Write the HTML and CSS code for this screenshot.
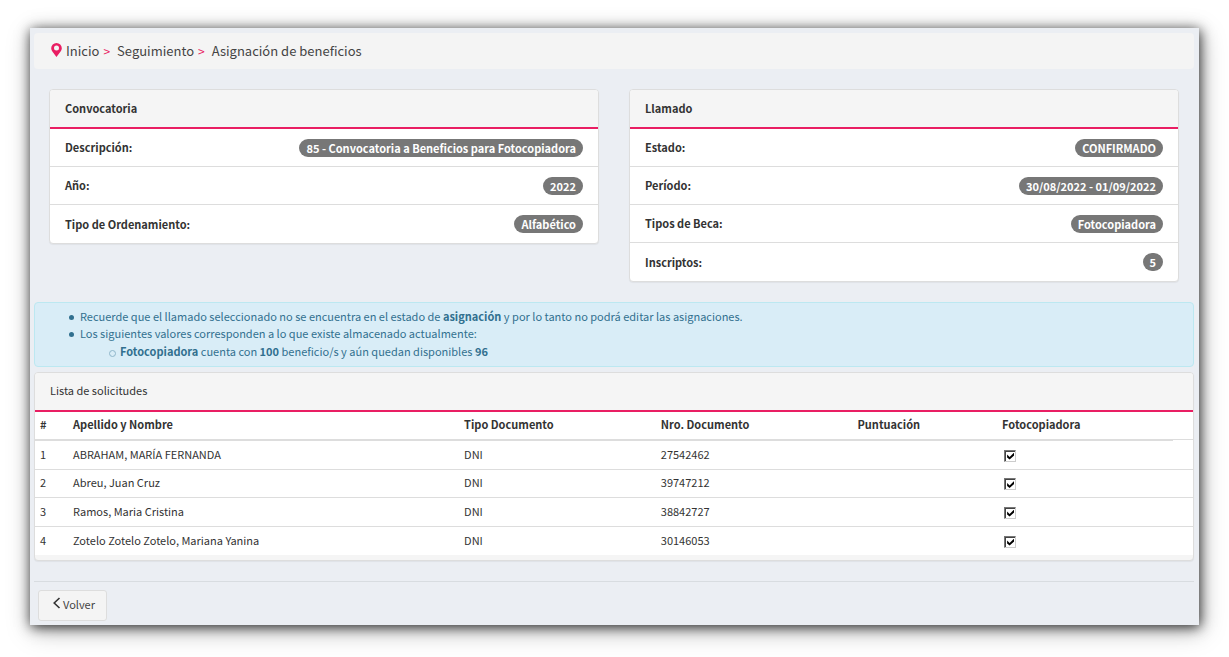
FILE: index.html
```html
<!DOCTYPE html>
<html lang="es">
<head>
<meta charset="utf-8">
<title>Asignación de beneficios</title>
<link rel="stylesheet" href="styles.css">
</head>
<body>
<main class="window">
  <nav class="breadcrumb" aria-label="Ruta">
    <svg class="pin" viewBox="0 0 11 14" aria-hidden="true"><path fill-rule="evenodd" d="M5.500 0A5.300 5.300 0 0 0 .2 5.300C.2 8 3 10.500 5.500 14 8 10.500 10.800 8 10.800 5.300A5.300 5.300 0 0 0 5.500 0zm0 2.500a2.500 2.500 0 1 1 0 5 2.500 2.500 0 0 1 0-5z"/></svg>
    <a href="#">Inicio</a>
    <span class="sep">&gt;</span>
    <a href="#">Seguimiento</a>
    <span class="sep">&gt;</span>
    <a href="#">Asignación de beneficios</a>
  </nav>

  <div class="columns">
    <section class="panel">
      <h2 class="panel-heading strong">Convocatoria</h2>
      <ul class="facts">
        <li><b>Descripción:</b><span class="badge">85 - Convocatoria a Beneficios para Fotocopiadora</span></li>
        <li><b>Año:</b><span class="badge">2022</span></li>
        <li><b>Tipo de Ordenamiento:</b><span class="badge">Alfabético</span></li>
      </ul>
    </section>
    <section class="panel">
      <h2 class="panel-heading strong">Llamado</h2>
      <ul class="facts">
        <li><b>Estado:</b><span class="badge">CONFIRMADO</span></li>
        <li><b>Período:</b><span class="badge">30/08/2022 - 01/09/2022</span></li>
        <li><b>Tipos de Beca:</b><span class="badge">Fotocopiadora</span></li>
        <li><b>Inscriptos:</b><span class="badge">5</span></li>
      </ul>
    </section>
  </div>

  <div class="alert">
    <ul>
      <li>Recuerde que el llamado seleccionado no se encuentra en el estado de <b>asignación</b> y por lo tanto no podrá editar las asignaciones.</li>
      <li>Los siguientes valores corresponden a lo que existe almacenado actualmente:
        <ul>
          <li><b>Fotocopiadora</b> cuenta con <b>100</b> beneficio/s y aún quedan disponibles <b>96</b></li>
        </ul>
      </li>
    </ul>
  </div>

  <section class="panel list">
    <h2 class="panel-heading">Lista de solicitudes</h2>
    <table>
      <colgroup><col class="c-num"><col class="c-name"><col class="c-type"><col class="c-doc"><col class="c-score"><col class="c-check"><col class="c-end"></colgroup>
      <thead>
        <tr><th>#</th><th>Apellido y Nombre</th><th>Tipo Documento</th><th>Nro. Documento</th><th>Puntuación</th><th>Fotocopiadora</th><td></td></tr>
      </thead>
      <tbody>
        <tr><td>1</td><td>ABRAHAM, MARÍA FERNANDA</td><td>DNI</td><td>27542462</td><td></td><td><input type="checkbox" checked aria-label="Fotocopiadora, fila 1"></td><td></td></tr>
        <tr><td>2</td><td>Abreu, Juan Cruz</td><td>DNI</td><td>39747212</td><td></td><td><input type="checkbox" checked aria-label="Fotocopiadora, fila 2"></td><td></td></tr>
        <tr><td>3</td><td>Ramos, Maria Cristina</td><td>DNI</td><td>38842727</td><td></td><td><input type="checkbox" checked aria-label="Fotocopiadora, fila 3"></td><td></td></tr>
        <tr><td>4</td><td>Zotelo Zotelo Zotelo, Mariana Yanina</td><td>DNI</td><td>30146053</td><td></td><td><input type="checkbox" checked aria-label="Fotocopiadora, fila 4"></td><td></td></tr>
      </tbody>
    </table>
  </section>

  <footer class="actions">
    <button type="button" class="back"><svg viewBox="0 0 8 12" aria-hidden="true"><path d="M7 1 1.700 6 7 11"/></svg>Volver</button>
  </footer>
</main>
</body>
</html>
```

FILE: styles.css
```css
* {
  box-sizing: border-box;
}

body {
  margin: 0;
  padding: 28px 30px 32px;
  background: #fff;
  color: #333;
  font: 11px/17px "Noto Sans CJK SC", "Noto Sans", sans-serif;
}

.window {
  padding: 5px 5px 4px 4px;
  background: #ebeef3;
  box-shadow: 1px 2px 12px rgba(0, 0, 0, .8), 2px 6px 24px rgba(0, 0, 0, .25);
}

.breadcrumb {
  display: flex;
  align-items: center;
  height: 36px;
  padding: 0 17px 2px;
  border-radius: 4px;
  background: #f4f4f4;
  font-size: 13px;
}

.breadcrumb a {
  color: #444;
  text-decoration: none;
}

.pin {
  width: 11px;
  height: 14px;
  margin-right: 4px;
  fill: #e91e63;
}

.sep {
  margin: 0 7px 0 4px;
  color: #e91e63;
  font-size: 12px;
}

.columns {
  display: grid;
  grid-template-columns: 1fr 1fr;
  align-items: start;
  gap: 30px;
  padding: 20px 15px;
}

.panel {
  overflow: hidden;
  border: 1px solid #ddd;
  border-radius: 4px;
  background: #fff;
  box-shadow: 0 1px 1px rgba(0, 0, 0, .05);
}

.panel-heading {
  margin: 0;
  padding: 10px 15px;
  border-bottom: 2px solid #e91e63;
  background: #f5f5f5;
  font-size: 11px;
  font-weight: 400;
}

.strong {
  font-weight: 700;
}

.facts {
  margin: 0;
  padding: 0;
  list-style: none;
}

.facts li {
  display: flex;
  align-items: center;
  justify-content: space-between;
  height: 38px;
  padding: 0 15px;
  border-bottom: 1px solid #ddd;
}

.facts li:last-child {
  border-bottom: 0;
}

.badge {
  padding: 0 7px;
  border-radius: 10px;
  background: #777;
  color: #fff;
  font-weight: 700;
  line-height: 18px;
}

.alert {
  padding: 5px 5px 6px;
  border: 1px solid #bce8f1;
  border-radius: 4px;
  background: #d9edf7;
  color: #31708f;
}

.alert ul {
  margin: 0;
  padding-left: 40px;
  list-style: none;
}

.alert ul ul {
  padding-top: 1px;
}

.alert li {
  position: relative;
}

.alert li::before {
  content: "";
  position: absolute;
  top: 7px;
  left: -11px;
  width: 5px;
  height: 5px;
  border-radius: 50%;
  background: #31708f;
}

.alert ul ul li::before {
  border: 1px solid #8fb6ca;
  background: none;
}

.list {
  margin-top: 5px;
  padding-bottom: 5px;
  background: #f5f5f5;
}

.list .panel-heading {
  padding: 9px 15px 11px;
}

table {
  width: 100%;
  border-collapse: separate;
  border-spacing: 0;
  table-layout: fixed;
  background: #fff;
}

.c-num { width: 33px; }
.c-name { width: 33.8%; }
.c-type { width: 17%; }
.c-doc { width: 17%; }
.c-score { width: 12.5%; }
.c-check { width: 15.2%; }
.c-end { width: 20px; }

th,
td {
  height: 29px;
  padding: 0 5px 2px;
  border-bottom: 1px solid #ddd;
  text-align: left;
  vertical-align: middle;
}

th {
  border-bottom-width: 2px;
}

thead td {
  background: linear-gradient(#ddd, #ddd) 0 27px / 100% 1px no-repeat;
  border-bottom: 0;
}

tbody tr:nth-child(even) td {
  height: 28px;
}

tbody tr:last-child td {
  border-bottom: 0;
}

input[type="checkbox"] {
  display: block;
  appearance: none;
  width: 12px;
  height: 12px;
  margin: 3px 2px 0;
  border: 1px solid;
  border-color: #777 #ccc #ccc #777;
  background: #fff;
  box-shadow: inset 1px 1px #444;
}

input[type="checkbox"]:checked::before {
  content: "";
  display: block;
  width: 7px;
  height: 7px;
  margin: 2px;
  background: #000;
  clip-path: polygon(0 28%, 36% 64%, 100% 0, 100% 42%, 36% 100%, 0 70%);
}

.actions {
  margin-top: 20px;
  padding: 8px 4px 0;
  border-top: 1px solid #d8dce0;
}

.back {
  display: flex;
  align-items: center;
  height: 31px;
  padding: 0 11px 2px 13px;
  border: 1px solid #ddd;
  border-radius: 3px;
  background: #f4f4f4;
  color: #444;
  font: inherit;
}

.back svg {
  width: 9px;
  height: 12px;
  margin: 0 2px 3px 0;
  fill: none;
  stroke: #333;
  stroke-width: 1.6;
}
```
